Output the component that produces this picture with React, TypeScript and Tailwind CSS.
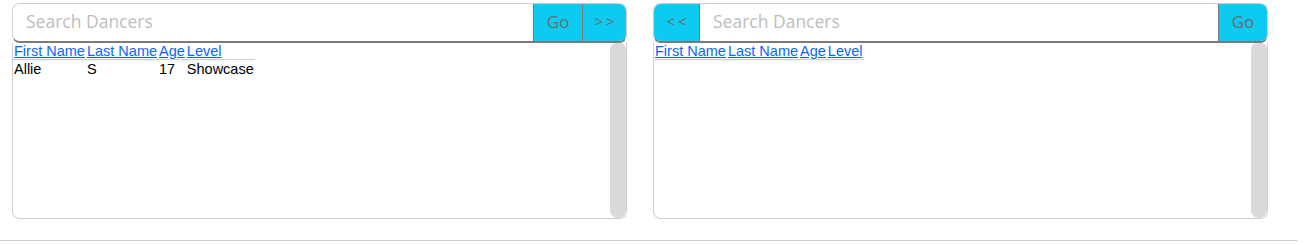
import React from 'react';

interface IDancer {
    first: string;
    last: string;
    age: number;
    level: string;
}

const dancers: IDancer[] = [{ first: 'Allie', last: 'S', age: 17, level: 'Showcase' }];

const inputFont = { fontFamily: '"Open Sans", "Noto Sans", sans-serif' };

const columns = ['First Name', 'Last Name', 'Age', 'Level'];

const Headers = () => (
    <tr>
        {columns.map((c) => (
            <th
                key={c}
                className="p-0 px-px text-left font-normal border-b border-[#d0d0d0] leading-[16px] whitespace-nowrap"
            >
                <a href="#" className="text-[#0a66ff] underline">
                    {c}
                </a>
            </th>
        ))}
    </tr>
);

const DancerTable = ({ rows }: { rows: IDancer[] }) => (
    <div className="flex h-[176px] border-x border-b border-[#cfcfcf] rounded-b-[8px] overflow-hidden">
        <div className="flex-1">
            <table
                className="text-[14.5px] text-black"
                style={{ fontFamily: '"Liberation Sans", Arial, sans-serif' }}
            >
                <thead>
                    <Headers />
                </thead>
                <tbody>
                    {rows.map((d) => (
                        <tr key={d.first} className="leading-[16px]">
                            <td className="p-0 px-px pt-px">{d.first}</td>
                            <td className="p-0 px-px pt-px">{d.last}</td>
                            <td className="p-0 px-px pt-px">{d.age}</td>
                            <td className="p-0 px-px pt-px">{d.level}</td>
                        </tr>
                    ))}
                </tbody>
            </table>
        </div>
        <div className="w-[16px] bg-[#d9d9d9] rounded-b-[8px] rounded-t-[6px]" />
    </div>
);

const CyanButton = ({ label, className }: { label: string; className: string }) => (
    <button
        type="button"
        className={`bg-[#0dcaf0] text-[#6b6b6b] flex items-center justify-center pb-[2px] ${className}`}
        style={inputFont}
    >
        {label}
    </button>
);

const SearchBar = ({ left }: { left: boolean }) => (
    <div className="flex h-[40px] border border-[#cfcfcf] border-b-[#7a7a7a] border-b-2 rounded-[8px] overflow-hidden">
        {!left && (
            <CyanButton label="<<" className="w-[46px] border-r border-[#7a7a7a] text-[15px] tracking-[3px] pl-[3px]" />
        )}
        <input
            placeholder="Search Dancers"
            className="flex-1 min-w-0 px-[13px] pb-[2px] text-[17.5px] outline-none placeholder:text-[#bdbdbd] bg-white"
            style={inputFont}
        />
        <CyanButton label="Go" className="w-[49px] border-l border-[#7a7a7a] text-[17px]" />
        {left && (
            <CyanButton label=">>" className="w-[44px] border-l border-[#7a7a7a] text-[15px] tracking-[3px] pl-[3px]" />
        )}
    </div>
);

const Panel = ({ left, rows }: { left: boolean; rows: IDancer[] }) => (
    <div className="w-[615px] flex flex-col">
        <SearchBar left={left} />
        <DancerTable rows={rows} />
    </div>
);

export default function App() {
    return (
        <div className="bg-white w-[1312px] h-[245px]">
            <div className="flex gap-[26px] pl-[12px] pt-[3px]">
                <Panel left rows={dancers} />
                <Panel left={false} rows={[]} />
            </div>
            <hr className="mt-[21px] w-[1297px] border-t border-[#cccccc]" />
        </div>
    );
}
